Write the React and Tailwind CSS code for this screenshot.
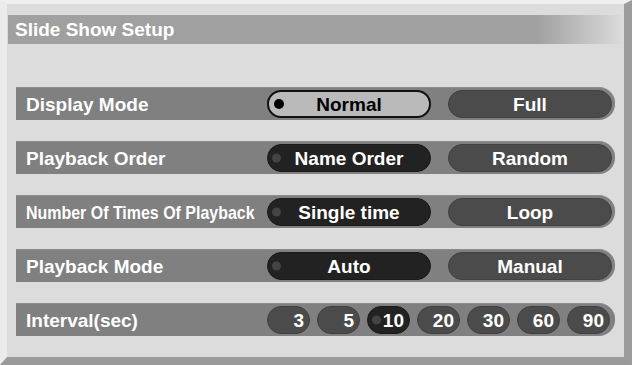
const rows = [
  { label: "Display Mode", options: ["Normal", "Full"], selected: 0, focused: true },
  { label: "Playback Order", options: ["Name Order", "Random"], selected: 0 },
  { label: "Number Of Times Of Playback", options: ["Single time", "Loop"], selected: 0, narrow: true },
  { label: "Playback Mode", options: ["Auto", "Manual"], selected: 0 },
];

const intervals = ["3", "5", "10", "20", "30", "60", "90"];

const OptionButton = ({ text, selected, focused }) => {
  if (focused) {
    return (
      <div className="relative flex h-[28px] w-[164px] items-center justify-center rounded-full border-2 border-[#111] bg-[#bababa] text-black">
        <span className="absolute left-[5px] top-1/2 h-[10px] w-[10px] -translate-y-1/2 rounded-full bg-black" />
        {text}
      </div>
    );
  }
  return (
    <div
      className={
        "relative flex h-[28px] w-[164px] items-center justify-center rounded-full border text-white " +
        (selected ? "border-[#1a1a1a] bg-[#222222]" : "border-[#404040] bg-[#4b4b4b]")
      }
    >
      {selected && (
        <span className="absolute left-[4px] top-1/2 h-[9px] w-[9px] -translate-y-1/2 rounded-full bg-[#444444]" />
      )}
      {text}
    </div>
  );
};

const Row = ({ children, label, narrow }) => (
  <div className="flex h-[33px] items-center rounded-r-[16px] bg-[#808080] pr-[3px] border-t border-[#8c8c8c]">
    <div className="w-[251px] pl-[10px] text-white whitespace-nowrap">
      {narrow ? (
        <span className="inline-block origin-left scale-x-[0.84]">{label}</span>
      ) : (
        label
      )}
    </div>
    {children}
  </div>
);

export default function App() {
  return (
    <div
      className="h-[365px] w-[632px] overflow-hidden bg-[#dcdcdc] text-[19px] font-bold leading-none"
      style={{ fontFamily: '"Liberation Sans", Arial, sans-serif' }}
    >
      <div className="flex h-full flex-col border-t-[4px] border-l-[7px] border-r-[8px] border-b-[8px] border-t-[#efefef] border-l-[#ebebeb] border-r-[#9c9c9c] border-b-[#9a9a9a]">
        <div className="ml-[1px] mr-[2px] mt-[11px] flex h-[29px] items-center bg-[linear-gradient(to_right,#a0a0a0_86%,#dadada_100%)] pl-[7px] text-white">
          Slide Show Setup
        </div>
        <div className="mt-[43px] flex flex-col gap-[21px] pl-[9px] pr-[9px]">
          {rows.map((r) => (
            <Row key={r.label} label={r.label} narrow={r.narrow}>
              <div className="flex gap-[17px]">
                {r.options.map((o, i) => (
                  <OptionButton
                    key={o}
                    text={o}
                    selected={i === r.selected}
                    focused={r.focused && i === r.selected}
                  />
                ))}
              </div>
            </Row>
          ))}
          <Row label="Interval(sec)">
            <div className="flex gap-[7px]">
              {intervals.map((v) => {
                const sel = v === "10";
                return (
                  <div
                    key={v}
                    className={
                      "relative flex h-[28px] w-[43px] items-center justify-end rounded-full border pr-[5px] text-white " +
                      (sel ? "border-[#1a1a1a] bg-[#222222]" : "border-[#404040] bg-[#4b4b4b]")
                    }
                  >
                    {sel && (
                      <span className="absolute left-[4px] top-1/2 h-[9px] w-[9px] -translate-y-1/2 rounded-full bg-[#444444]" />
                    )}
                    {v}
                  </div>
                );
              })}
            </div>
          </Row>
        </div>
      </div>
    </div>
  );
}
